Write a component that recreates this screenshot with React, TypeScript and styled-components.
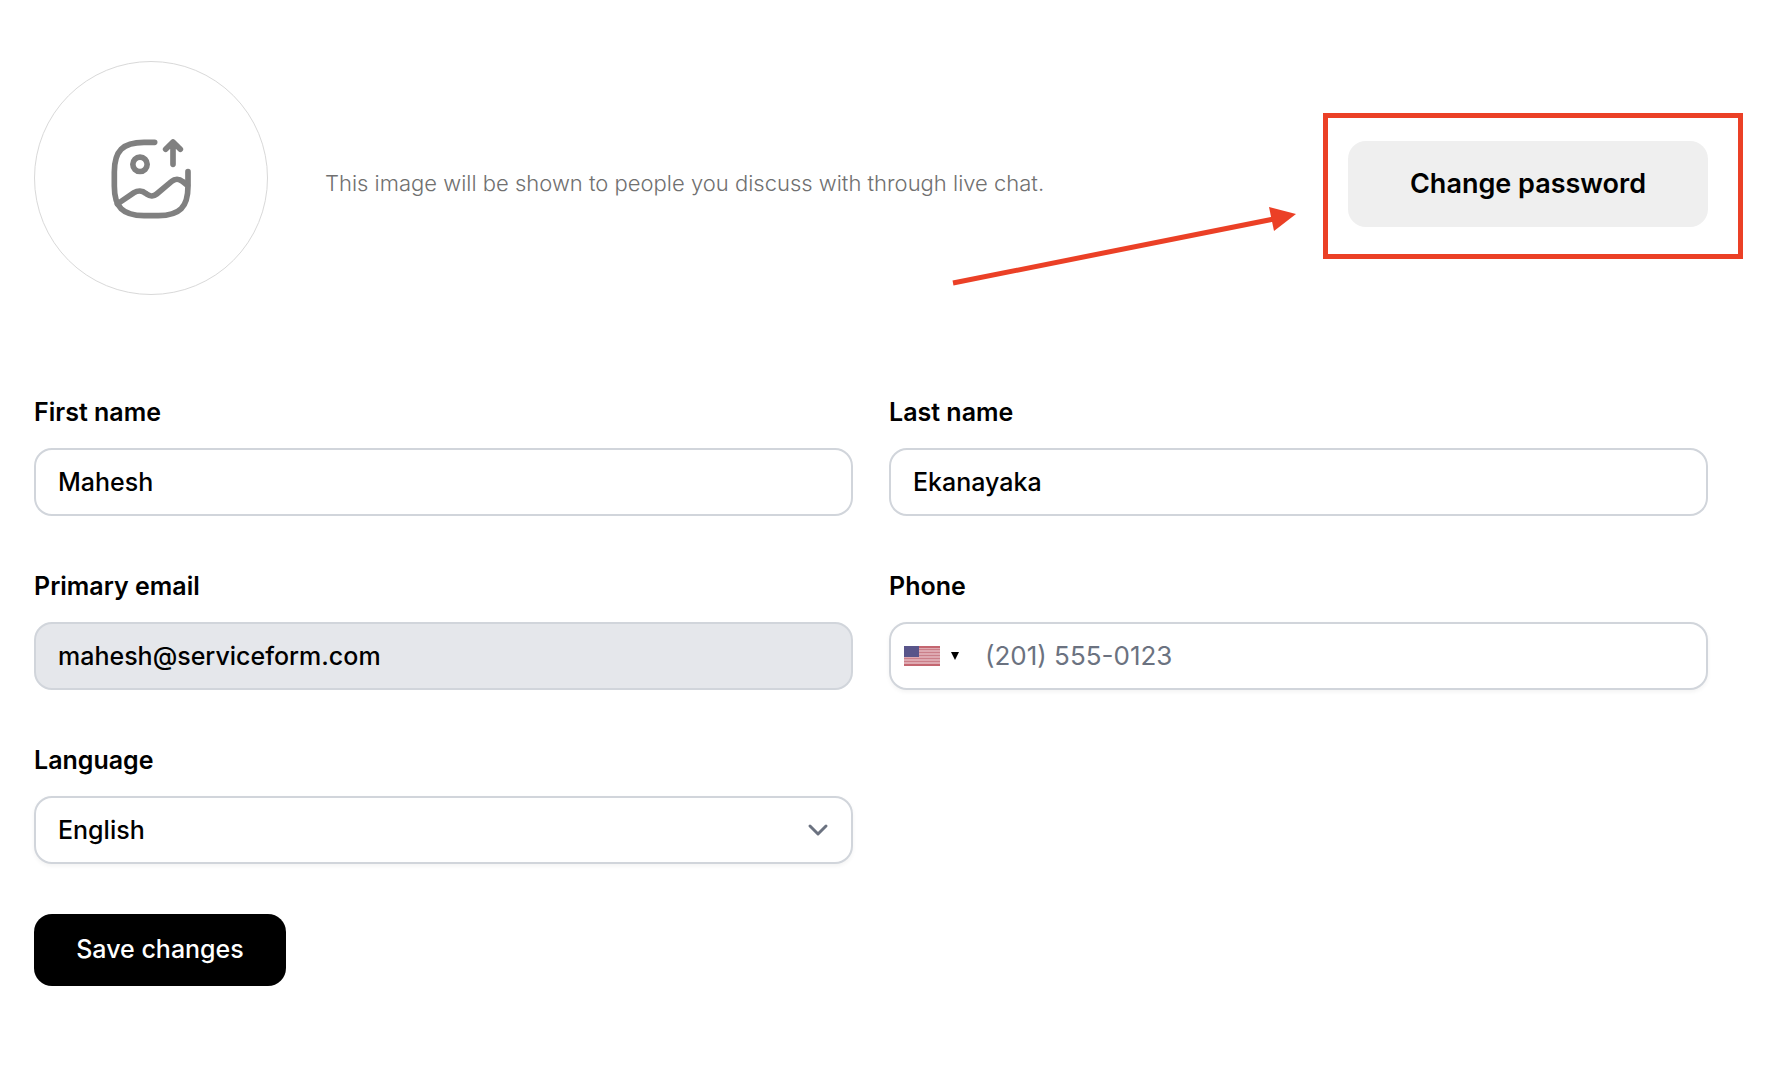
import React, { useState } from "react";
import styled, { createGlobalStyle, css } from "styled-components";

const GlobalStyle = createGlobalStyle`
  *, *::before, *::after { box-sizing: border-box; }
  body {
    margin: 0;
    background: #fff;
    color: #000;
    font-family: Inter, "Liberation Sans", sans-serif;
  }
  button, input, select { font: inherit; color: inherit; margin: 0; }
`;

const Page = styled.main`
  padding: 61px 72px 80px 34px;
`;

const Header = styled.header`
  display: flex;
  align-items: center;
  margin-bottom: 87px;
`;

const AvatarUpload = styled.button`
  display: grid;
  place-items: center;
  flex: none;
  width: 234px;
  height: 234px;
  margin-bottom: 12px;
  padding: 0;
  border: 1px solid #d9d9d9;
  border-radius: 50%;
  background: #fff;
  cursor: pointer;
`;

const AvatarHint = styled.p`
  flex: 1;
  margin: 0 57px;
  padding-bottom: 2px;
  font-size: 22px;
  font-weight: 300;
  line-height: 32px;
  color: #707070;
`;

const PasswordArea = styled.div`
  position: relative;
  flex: none;
`;

const PasswordButton = styled.button`
  display: block;
  width: 360px;
  height: 86px;
  padding: 0 0 2px;
  border: 0;
  border-radius: 18px;
  background: #efefef;
  font-size: 27px;
  font-weight: 600;
  cursor: pointer;
`;

const HighlightFrame = styled.div`
  position: absolute;
  inset: -28px -35px -32px -25px;
  border: 5px solid #eb4026;
  pointer-events: none;
`;

const PointerArrow = styled.svg`
  position: absolute;
  top: 64px;
  right: calc(100% + 52px);
  overflow: visible;
  pointer-events: none;
`;

const Fields = styled.div`
  display: grid;
  grid-template-columns: 1fr 1fr;
  gap: 52px 36px;
`;

const Field = styled.div`
  display: flex;
  flex-direction: column;
  gap: 18px;
`;

const Label = styled.label`
  font-size: 25px;
  line-height: 36px;
  font-weight: 600;
`;

const control = css`
  width: 100%;
  height: 68px;
  border: 2px solid #d1d5db;
  border-radius: 18px;
  background: #fff;
`;

const TextInput = styled.input`
  ${control}
  padding: 0 22px;
  font-size: 25px;
  font-weight: 500;

  &:disabled {
    background: #e5e7eb;
    color: #000;
    opacity: 1;
  }
`;

const PhoneBox = styled.div`
  ${control}
  display: flex;
  overflow: hidden;
  box-shadow: 0 2px 4px rgba(0, 0, 0, 0.05);
`;

const CountryButton = styled.button`
  display: flex;
  align-items: center;
  gap: 11px;
  padding: 0 12px 0 13px;
  border: 0;
  background: none;
  cursor: pointer;
`;

const PhoneInput = styled.input`
  flex: 1;
  min-width: 0;
  padding: 0 14px 2px;
  border: 0;
  outline: 0;
  background: none;
  font-size: 26px;

  &::placeholder {
    color: #6b7280;
    opacity: 1;
  }
`;

const SelectBox = styled.div`
  display: grid;
  align-items: center;

  > * { grid-area: 1 / 1; }

  > svg {
    justify-self: end;
    margin-right: 24px;
    pointer-events: none;
  }
`;

const Select = styled.select`
  ${control}
  appearance: none;
  padding: 0 60px 0 22px;
  font-size: 25px;
  font-weight: 500;
  box-shadow: 0 2px 4px rgba(0, 0, 0, 0.05);
`;

const SaveButton = styled.button`
  display: block;
  width: 252px;
  height: 72px;
  margin-top: 50px;
  padding: 0 0 2px;
  border: 0;
  border-radius: 18px;
  background: #000;
  color: #fff;
  font-size: 25px;
  font-weight: 500;
  cursor: pointer;
`;

function ImageUploadIcon() {
  return (
    <svg width="84" height="84" viewBox="267 258 252 252" fill="none" stroke="#808080"
      strokeWidth="17" strokeLinecap="round" strokeLinejoin="round" aria-hidden="true">
      <path d="M404 277H372C308 277 283 302 283 366V408C283 472 308 497 372 497H415C479 497 504 472 504 408V365" />
      <circle cx="360" cy="343" r="21.5" />
      <path d="M459 343V278M437 298L459 276L481 298" />
      <path d="M292 462L342 428C353 421 367 421 377 430L381 433C390 440 402 439 410 432L455 394C464 386 478 386 487 394L502 406" />
    </svg>
  );
}

function UsFlag() {
  return (
    <svg width="36" height="20" viewBox="0 0 36 20" aria-hidden="true">
      <rect width="36" height="20" fill="#dea9b1" />
      {[0, 3, 6, 9, 12, 15, 18].map((y) => (
        <rect key={y} y={y} width="36" height={y === 0 || y === 18 ? 2 : 1}
          fill={y === 0 || y === 18 ? "#c46670" : "#cb7f89"} />
      ))}
      <rect width="15" height="11" fill="#59558a" />
    </svg>
  );
}

export default function App() {
  const [first, setFirst] = useState("Mahesh");
  const [last, setLast] = useState("Ekanayaka");

  return (
    <>
      <GlobalStyle />
      <Page>
        <Header>
          <AvatarUpload type="button" aria-label="Upload profile image">
            <ImageUploadIcon />
          </AvatarUpload>
          <AvatarHint>This image will be shown to people you discuss with through live chat.</AvatarHint>
          <PasswordArea>
            <PasswordButton type="button">Change password</PasswordButton>
            <HighlightFrame />
            <PointerArrow width="346" height="80" viewBox="0 0 346 80" aria-hidden="true">
              <path d="M3 78L324 14" stroke="#eb4026" strokeWidth="5" />
              <path d="M319 2L346 9L324 26Z" fill="#eb4026" />
            </PointerArrow>
          </PasswordArea>
        </Header>
        <form onSubmit={(e) => e.preventDefault()}>
          <Fields>
            <Field>
              <Label htmlFor="first-name">First name</Label>
              <TextInput id="first-name" value={first} onChange={(e) => setFirst(e.target.value)} />
            </Field>
            <Field>
              <Label htmlFor="last-name">Last name</Label>
              <TextInput id="last-name" value={last} onChange={(e) => setLast(e.target.value)} />
            </Field>
            <Field>
              <Label htmlFor="email">Primary email</Label>
              <TextInput id="email" type="email" value="mahesh@serviceform.com" disabled readOnly />
            </Field>
            <Field>
              <Label htmlFor="phone">Phone</Label>
              <PhoneBox>
                <CountryButton type="button" aria-label="Country: United States">
                  <UsFlag />
                  <svg width="8" height="8" viewBox="0 0 8 8" aria-hidden="true">
                    <path d="M0 0H8L4 8Z" />
                  </svg>
                </CountryButton>
                <PhoneInput id="phone" type="tel" placeholder="(201) 555-0123" />
              </PhoneBox>
            </Field>
            <Field>
              <Label htmlFor="language">Language</Label>
              <SelectBox>
                <Select id="language" defaultValue="English">
                  <option>English</option>
                </Select>
                <svg width="22" height="14" viewBox="0 0 22 14" fill="none" stroke="#6b7280"
                  strokeWidth="3" strokeLinecap="round" strokeLinejoin="round" aria-hidden="true">
                  <path d="M3 3L11 11L19 3" />
                </svg>
              </SelectBox>
            </Field>
          </Fields>
          <SaveButton type="submit">Save changes</SaveButton>
        </form>
      </Page>
    </>
  );
}
